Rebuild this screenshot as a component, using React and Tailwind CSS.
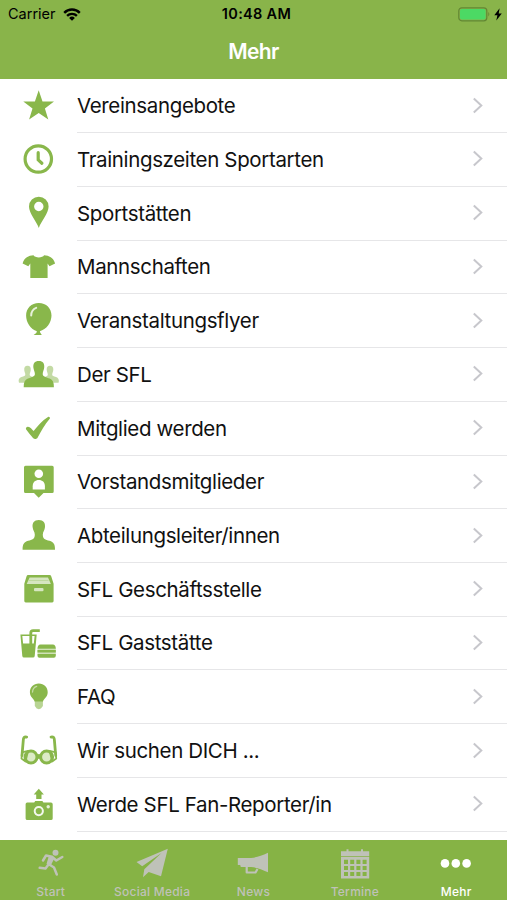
import React, { useState } from "react";

const StarIcon = () => (
  <path d="M38.7 11.2 42.5 22.4 54 22.6 44.9 29.5 48.3 40.5 38.7 34 29.1 40.5 32.5 29.5 23.3 22.6 34.9 22.4Z" />
);

const ClockIcon = () => (
  <g fill="none" stroke="#89b74b" strokeWidth="3.2" strokeLinecap="round" strokeLinejoin="round">
    <circle cx="38.3" cy="26" r="13.2" />
    <path d="M38.2 19.7v7.200l3.700 3.300" />
  </g>
);

const PinIcon = () => (
  <path
    fillRule="evenodd"
    d="M38.8 41C36.4 34 29 26.4 29 19.5a9.8 9.8 0 0 1 19.6 0C48.6 26.4 41.2 34 38.8 41ZM38.8 14.8a4.7 4.7 0 1 0 0 9.4 4.7 4.7 0 0 0 0-9.4Z"
  />
);

const ShirtIcon = () => (
  <path d="M33.5 14.3c1.4 2.8 9.2 2.8 10.6 0 5 .5 9 2 11 8.2l-5.6 2.7-1.9-2.700V37H30.3V22.5l-2 2.7-5.7-2.7c1.900-6.200 5.900-7.700 10.900-8.200Z" />
);

const BalloonIcon = () => (
  <>
    <path d="M38.8 9c7.500 0 12.700 5.400 12.700 12.600 0 7-5.200 14.200-11.700 15.600l.5 1.600 1.500 2.300h-8.200l2.700-2.200.6-1.700c-6.300-1.600-10.800-8.600-10.800-15.600 0-7.200 5.200-12.600 12.700-12.600Z" />
    <path d="M31.2 21.500c.1-3.600 1.800-6.400 5-7.600" fill="none" stroke="#fff" strokeOpacity=".8" strokeWidth="2" strokeLinecap="round" />
  </>
);

const GroupIcon = () => (
  <>
    <g opacity=".5">
      <path d="M27.500 17.800c2.600 0 3.600 2 3.200 4.600-.3 1.800-1 2.700-1 4.300 0 1.500 3 2 4.300 3.300v4.800H19c-1-3 .2-5 2.500-5.800 2.400-.8 3.800-1 3.800-2.500s-.7-2.300-1-4.100c-.4-2.600.6-4.600 3.200-4.600Z" />
      <path d="M50 17.800c2.600 0 3.600 2 3.200 4.600-.3 1.800-1 2.700-1 4.300 0 1.300 1.400 1.500 3.800 2.300 2.300.8 3.500 2.800 2.500 5.800H43.500V30c1.300-1.300 4.300-1.800 4.300-3.300s-.7-2.500-1-4.300c-.4-2.600.6-4.600 3.200-4.600Z" />
    </g>
    <path d="M38.800 13.100c4.200 0 5.900 2.700 5.400 6.600-.4 2.600-1.500 4-1.500 6.300 0 2.600 3.800 3.300 7 4.600 3.100 1.200 4.300 4 4.200 8.600H23.700c-.1-4.600 1.100-7.400 4.200-8.600 3.200-1.300 7-2 7-4.600 0-2.300-1.100-3.700-1.500-6.300-.5-3.900 1.200-6.600 5.400-6.600Z" />
  </>
);

const CheckIcon = () => (
  <path d="M26 27.200c-.5-1 .8-2.600 2-2.400 2.300.4 3.900 2.500 5.600 4.300 4.200-5.200 8.300-10.600 14.400-14.200.9-.5 2.300.4 1.900 1.500-5.500 6.500-8.700 12.600-12.200 19.200-1 1.900-3.500 1.900-4.700.3-2.500-2.900-4.700-5.500-7-8.700Z" />
);

const BadgeIcon = () => (
  <>
    <path d="M25.5 9.800h26.700q1.500 0 1.500 1.500v24.200q0 1.500-1.500 1.500H43.500l-4.800 4.700L34 37h-8.500Q24 37 24 35.500V11.300q0-1.500 1.500-1.500Z" />
    <circle cx="38.8" cy="17.800" r="4.300" fill="#fff" />
    <path fill="#fff" d="M32.700 33.500v-3.200c0-4.200 2.500-6.300 6.100-6.300s6.100 2.100 6.100 6.300v3.200Z" />
  </>
);

const PersonIcon = () => (
  <path d="M38.800 10.900c4.800 0 6.600 2.900 6.200 7.200-.3 3.300-2.100 4.700-2.200 7.300-.1 4.500 2.500 5.200 6.700 6.400 4.200 1.300 5.600 3.500 5.500 8.900H22.600c-.1-5.400 1.300-7.600 5.500-8.900 4.200-1.200 6.800-1.900 6.700-6.400-.1-2.600-1.900-4-2.200-7.300-.4-4.300 1.400-7.200 6.200-7.200Z" />
);

const BoxIcon = () => (
  <>
    <path d="M28.200 12h21.200q1.500 0 1.900 1.400l2.300 7.400v17.300q0 1.400-1.400 1.400H25.700q-1.400 0-1.400-1.400V20.800l2.200-7.400q.3-1.400 1.700-1.400Z" />
    <path d="M29.600 14.400h18.400l2.900 6.700H26.700Z" fill="#fff" opacity=".65" />
    <path d="M29 17.500h19.500" stroke="#89b74b" strokeWidth=".7" opacity=".4" />
    <rect x="34" y="25" width="9.5" height="3.300" rx="1" fill="#fff" opacity=".65" />
  </>
);

const SnackIcon = () => (
  <>
    <path fillRule="evenodd" d="M20.400 17.400h16.300l-2 21.600q-.2 1.500-1.700 1.500h-9q-1.500 0-1.700-1.500ZM22.300 18.900l.8 7.600h10.700l.8-7.600Z" />
    <path d="M30.800 27.500V15.900q0-2.300 2.300-2.300h6.700" fill="none" stroke="#89b74b" strokeWidth="2.800" />
    <path d="M37.500 31.800c0-2.700 1-4.300 3-4.300h12.300c2 0 3 1.600 3 4.300Z" />
    <rect x="37.500" y="33" width="18.300" height="2.500" />
    <rect x="37.500" y="31.500" width="18.300" height="5.800" opacity=".4" />
    <path d="M37.500 36.900h18.300v1.900q0 1.900-1.900 1.900H39.400q-1.900 0-1.900-1.900Z" />
  </>
);

const BulbIcon = () => (
  <>
    <path d="M38.800 13.500c5.200 0 8.900 3.800 8.900 8.700 0 5-4.300 6.400-4.800 9.500h-8.200c-.5-3.100-4.800-4.500-4.800-9.500 0-4.900 3.700-8.700 8.900-8.700Z" />
    <path d="M34.800 31.700h8.100v4.300l-2 2.400-2.100.8-2.100-.8-1.900-2.400Z" opacity=".6" />
    <path d="M32.500 22c.2-3.200 1.700-5 4.200-5.700" fill="none" stroke="#fff" strokeOpacity=".5" strokeWidth="1.300" strokeLinecap="round" />
  </>
);

const GlassesIcon = () => (
  <g stroke="#89b74b">
    <g fill="#dcebc6" strokeWidth="3">
      <circle cx="31" cy="33" r="6" />
      <circle cx="46.600" cy="33" r="6" />
    </g>
    <path d="M36.500 31.300q2.300-1.500 4.600 0v3h-4.600Z" strokeWidth="1" />
    <path d="M26.700 13.100c-2.600-.5-3.300.8-3.400 3L22 31.500M51 13.100c2.600-.5 3.300.8 3.400 3L55.700 31.500" fill="none" strokeWidth="2.800" strokeLinecap="round" />
    <path d="M22 28.500 28 27 25.500 37.500 21.500 34.500ZM55.700 28.500 49.700 27 52.200 37.500 56.200 34.500Z" fill="none" strokeWidth="1.800" strokeLinejoin="round" />
  </g>
);

const CameraIcon = () => (
  <>
    <path d="m38.800 10.800 5.100 5.700h-2.400v4.500h-5.300v-4.500h-2.500Z" />
    <path d="M27.200 24.500h7l1-1.500h7.200l1 1.500h7.600q1.700 0 1.700 1.700v14.200q0 1.700-1.700 1.700H27.300q-1.700 0-1.700-1.700V26.200q0-1.700 1.600-1.700Z" />
    <circle cx="38.800" cy="33.100" r="4.100" fill="none" stroke="#fff" strokeOpacity=".9" strokeWidth="2" />
    <circle cx="48.200" cy="28.700" r="1.700" fill="#fff" opacity=".8" />
  </>
);

const menuItems = [
  { label: "Vereinsangebote", Icon: StarIcon },
  { label: "Trainingszeiten Sportarten", Icon: ClockIcon },
  { label: "Sportstätten", Icon: PinIcon },
  { label: "Mannschaften", Icon: ShirtIcon },
  { label: "Veranstaltungsflyer", Icon: BalloonIcon },
  { label: "Der SFL", Icon: GroupIcon },
  { label: "Mitglied werden", Icon: CheckIcon },
  { label: "Vorstandsmitglieder", Icon: BadgeIcon },
  { label: "Abteilungsleiter/innen", Icon: PersonIcon },
  { label: "SFL Geschäftsstelle", Icon: BoxIcon },
  { label: "SFL Gaststätte", Icon: SnackIcon },
  { label: "FAQ", Icon: BulbIcon },
  { label: "Wir suchen DICH ...", Icon: GlassesIcon },
  { label: "Werde SFL Fan-Reporter/in", Icon: CameraIcon },
];

const RunnerIcon = () => (
  <>
    <circle cx="25.500" cy="12.700" r="3" />
    <path d="M13 20.500 16 15.500 22 16.700 26.300 20.500 32.300 17M22 17 18.500 24 24 27.500 26.800 34.500M18.500 24.500 15.500 28.500 9.700 27.800" fill="none" stroke="currentColor" strokeWidth="2.500" strokeLinecap="round" strokeLinejoin="round" />
    <path d="m19 15.500 5.500 2.500-4 8-4-2Z" />
  </>
);

const PlaneIcon = () => (
  <path d="M36.800 8.800 5.500 22l5.700 4.200L30.500 13 13.300 29.200 12 37.300l5.700-5.300 12.300 4.300Z" />
);

const MegaphoneIcon = () => (
  <>
    <path d="M5.800 18H19c6-.6 10.500-2.200 17-5.200v19.400c-6.500-2.800-11-4.700-17-5.200H8.800l-.6-2H5.800Z" />
    <path d="M14.700 26.500v6h8.800l2-3.500" fill="none" stroke="currentColor" strokeWidth="2.200" strokeLinejoin="round" />
  </>
);

const CalendarIcon = () => (
  <path
    fillRule="evenodd"
    d="M7 11.300h5.500V9.200h2v2.100h12.500V9.200h2v2.100h6.200v27.200H7ZM7 16.200v.8h28.200v-.8ZM10 19.700v4.200h4v-4.200Zm6.200 0v4.200h4v-4.200Zm6.200 0v4.200h4v-4.200Zm6.200 0v4.200h4v-4.200ZM10 25.900v4.200h4v-4.200Zm6.200 0v4.200h4v-4.200Zm6.200 0v4.200h4v-4.200Zm6.200 0v4.200h4v-4.200ZM10 32.100v4h4v-4Zm6.200 0v4h4v-4Zm6.200 0v4h4v-4Zm6.200 0v4h4v-4Z"
  />
);

const DotsIcon = () => (
  <>
    <circle cx="10" cy="23.400" r="4.300" />
    <circle cx="20.800" cy="23.400" r="4.300" />
    <circle cx="31.600" cy="23.400" r="4.300" />
  </>
);

const tabs = [
  { label: "Start", Icon: RunnerIcon },
  { label: "Social Media", Icon: PlaneIcon },
  { label: "News", Icon: MegaphoneIcon },
  { label: "Termine", Icon: CalendarIcon },
  { label: "Mehr", Icon: DotsIcon },
];

const StatusBar = () => (
  <div className="grid h-[28px] grid-cols-3 items-center pl-2 pr-[5px] text-black">
    <div className="flex items-center gap-[7px]">
      <span className="text-[14.5px] leading-none">Carrier</span>
      <svg width="18" height="13" viewBox="0 0 18 13" fill="none" stroke="currentColor" strokeWidth="2.4">
        <path d="M1.200 4.800a11 11 0 0 1 15.600 0M4.100 7.900a7 7 0 0 1 9.800 0" />
        <path d="M9 12.800 6.100 9.900a4.100 4.100 0 0 1 5.800 0Z" fill="currentColor" stroke="none" />
      </svg>
    </div>
    <span className="whitespace-nowrap pl-[3px] text-center text-[14.5px] font-semibold leading-none tracking-[0.3px]">10:48 AM</span>
    <div className="flex items-center justify-end gap-[3px]">
      <svg width="33" height="15" viewBox="0 0 33 15">
        <rect x=".8" y=".8" width="28" height="13" rx="3" fill="none" stroke="#628734" strokeWidth="1.2" />
        <rect x="2" y="2" width="25.600" height="10.600" rx="1.800" fill="#4cd964" />
        <path d="M30.300 5.100q2 2.200 0 4.400Z" fill="#628734" />
      </svg>
      <svg width="8" height="13" viewBox="0 0 8 13" fill="currentColor">
        <path d="M5.600.3.300 7.300h3.100L2.300 12.600 7.800 5.400H4.700Z" />
      </svg>
    </div>
  </div>
);

const App = () => {
  const [activeTab, setActiveTab] = useState("Mehr");

  return (
    <div className="flex h-[900px] w-[507px] flex-col overflow-hidden bg-white font-['Inter',sans-serif]">
      <header className="h-[79.4px] shrink-0 bg-[#89b44a]">
        <StatusBar />
        <h1 className="pt-[8px] text-center text-[21px] font-semibold leading-8 tracking-[-0.6px] text-white">Mehr</h1>
      </header>

      <ul className="min-h-0 flex-1 overflow-hidden">
        {menuItems.map(({ label, Icon }) => (
          <li key={label} className="flex h-[53.74px]">
            <svg className="w-[77px] shrink-0" height="53.74" viewBox="0 0 77 53.74" fill="#89b74b">
              <Icon />
            </svg>
            <div className="flex flex-1 items-center justify-between border-b border-[#e6e6e8] pr-[23px]">
              <span className="whitespace-nowrap pt-[1.5px] text-[20.5px] tracking-[-0.36px] text-[#111]">{label}</span>
              <svg width="12" height="18" viewBox="0 0 12 18" fill="none" stroke="#c7c7cc" strokeWidth="2">
                <path d="m1.800 1.500 7.500 7-7.500 7" />
              </svg>
            </div>
          </li>
        ))}
      </ul>

      <nav className="grid h-[60px] shrink-0 grid-cols-5 bg-[#86b345]">
        {tabs.map(({ label, Icon }) => (
          <button
            key={label}
            onClick={() => setActiveTab(label)}
            className={`flex flex-col items-center ${activeTab === label ? "text-white" : "text-[#bfc2b8]"}`}
          >
            <svg width="42" height="43" viewBox="0 0 42 43" fill="currentColor" className="shrink-0">
              <Icon />
            </svg>
            <span className="whitespace-nowrap text-[12px] font-medium leading-[18px] tracking-[0.25px]">{label}</span>
          </button>
        ))}
      </nav>
    </div>
  );
};

export default App;
